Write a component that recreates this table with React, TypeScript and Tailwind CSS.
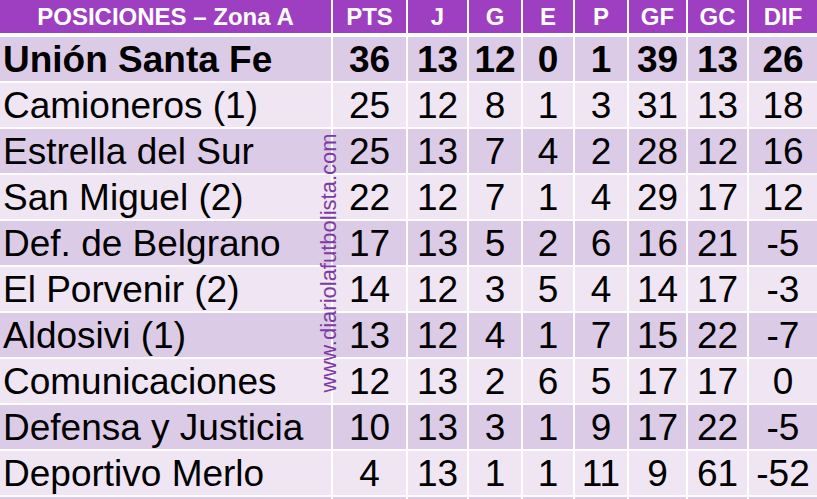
const cols = ["PTS", "J", "G", "E", "P", "GF", "GC", "DIF"];

const rows: [string, ...number[]][] = [
  ["Unión Santa Fe", 36, 13, 12, 0, 1, 39, 13, 26],
  ["Camioneros (1)", 25, 12, 8, 1, 3, 31, 13, 18],
  ["Estrella del Sur", 25, 13, 7, 4, 2, 28, 12, 16],
  ["San Miguel (2)", 22, 12, 7, 1, 4, 29, 17, 12],
  ["Def. de Belgrano", 17, 13, 5, 2, 6, 16, 21, -5],
  ["El Porvenir (2)", 14, 12, 3, 5, 4, 14, 17, -3],
  ["Aldosivi (1)", 13, 12, 4, 1, 7, 15, 22, -7],
  ["Comunicaciones", 12, 13, 2, 6, 5, 17, 17, 0],
  ["Defensa y Justicia", 10, 13, 3, 1, 9, 17, 22, -5],
  ["Deportivo Merlo", 4, 13, 1, 1, 11, 9, 61, -52],
];

const grid =
  "grid grid-cols-[331px_73px_59px_52px_50px_52px_57px_59px_1fr] gap-x-[2px]";

export default function App() {
  return (
    <div
      className="relative w-[817px] h-[499px] overflow-hidden bg-white"
      style={{ fontFamily: '"Liberation Sans", Arial, sans-serif' }}
    >
      {/* header */}
      <div className={`${grid} h-[33px] mb-[4px]`}>
        <div className="bg-[#9e3ec0] flex items-center justify-center text-white font-bold text-[24px] leading-none">
          POSICIONES – Zona A
        </div>
        {cols.map((c) => (
          <div
            key={c}
            className="bg-[#9e3ec0] flex items-center justify-center text-white font-bold text-[24px] leading-none"
          >
            {c}
          </div>
        ))}
      </div>

      {/* rows */}
      <div className="flex flex-col gap-y-[2px]">
        {rows.map(([name, ...nums], i) => {
          const bg = i % 2 === 0 ? "bg-[#dccbe7]" : "bg-[#efe5f3]";
          const weight = i === 0 ? "font-bold" : "font-normal";
          return (
            <div key={name} className={`${grid} h-[44px]`}>
              <div
                className={`${bg} ${weight} flex items-center pl-[3px] text-[37px] leading-none text-black whitespace-nowrap`}
              >
                {name}
              </div>
              {nums.map((n, j) => (
                <div
                  key={j}
                  className={`${bg} ${weight} flex items-center justify-center text-[37px] leading-none text-black`}
                >
                  {n}
                </div>
              ))}
            </div>
          );
        })}
        <div className={`${grid} h-[44px]`}>
          {Array.from({ length: 9 }).map((_, j) => (
            <div key={j} className="bg-[#dccbe7]" />
          ))}
        </div>
      </div>

      {/* watermark */}
      <div className="absolute left-[329px] top-[263px] -translate-x-1/2 -translate-y-1/2 -rotate-90 whitespace-nowrap text-[22px] leading-none text-[#7d3aa3]">
        www.diariolafutbolista.com
      </div>
    </div>
  );
}
